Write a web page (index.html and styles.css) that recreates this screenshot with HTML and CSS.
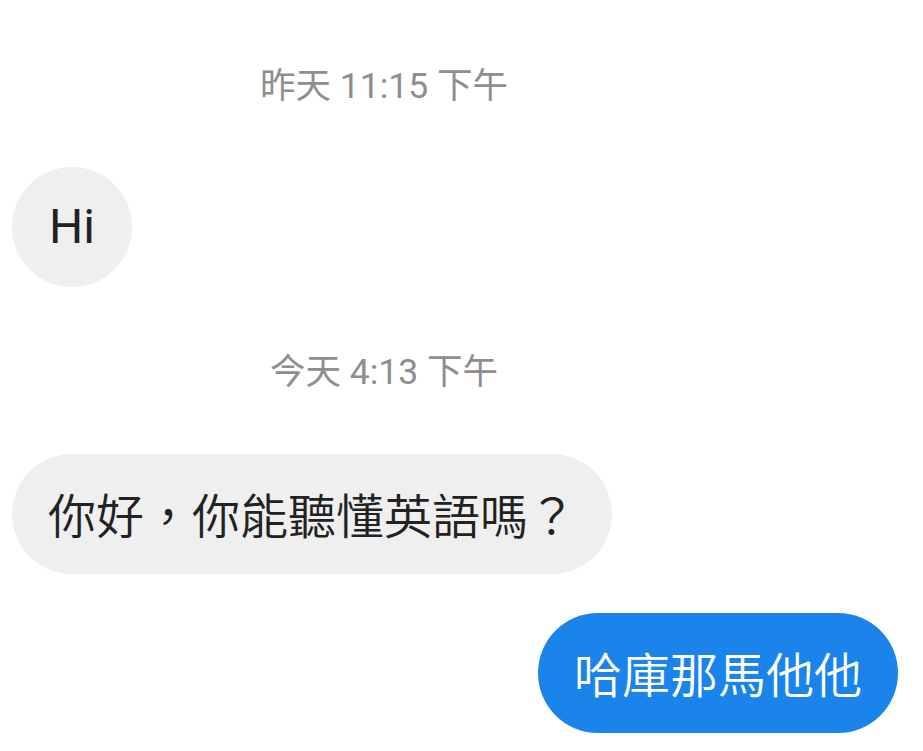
FILE: index.html
```html
<!DOCTYPE html>
<html lang="zh-Hant">
<head>
    <meta charset="UTF-8">
    <meta name="viewport" content="width=device-width, initial-scale=1.0">
    <title>對話</title>
    <link rel="stylesheet" href="styles.css">
</head>
<body>
    <div class="chat">
        <div class="stamp first">昨天 11:15 下午</div>
        <div class="bubble in hi">Hi</div>

        <div class="stamp">今天 4:13 下午</div>
        <div class="bubble in">你好，你能聽懂英語嗎？</div>
        <div class="bubble out">哈庫那馬他他</div>
    </div>
</body>
</html>
```

FILE: styles.css
```css
* {
    margin: 0;
    padding: 0;
    box-sizing: border-box;
}

body {
    font-family: Roboto, "Noto Sans CJK TC", "Noto Sans", sans-serif;
    background: #fff;
    color: #222;
    height: 100vh;
    overflow: hidden;
}

.chat {
    display: flex;
    flex-direction: column;
    padding: 0 25px 0 12px;
}

.stamp {
    margin: 65px 142px 0 0;
    text-align: center;
    color: #8e8e8e;
    font-size: 35.5px;
    line-height: 40px;
}

.stamp.first {
    margin-top: 66px;
}

.bubble {
    height: 120px;
    padding: 8px 36px 0;
    border-radius: 60px;
    font-size: 48px;
    line-height: 112px;
    font-weight: 350;
    white-space: nowrap;
    margin-top: 62px;
}

.bubble.in {
    align-self: flex-start;
    background: #efefef;
    color: #222;
}

.bubble.hi {
    margin-top: 61px;
    width: 120px;
    padding: 0;
    line-height: 120px;
    text-align: center;
    font-weight: 400;
}

.bubble.out {
    align-self: flex-end;
    margin-top: 39px;
    background: #1a84ea;
    color: #fff;
}
```
